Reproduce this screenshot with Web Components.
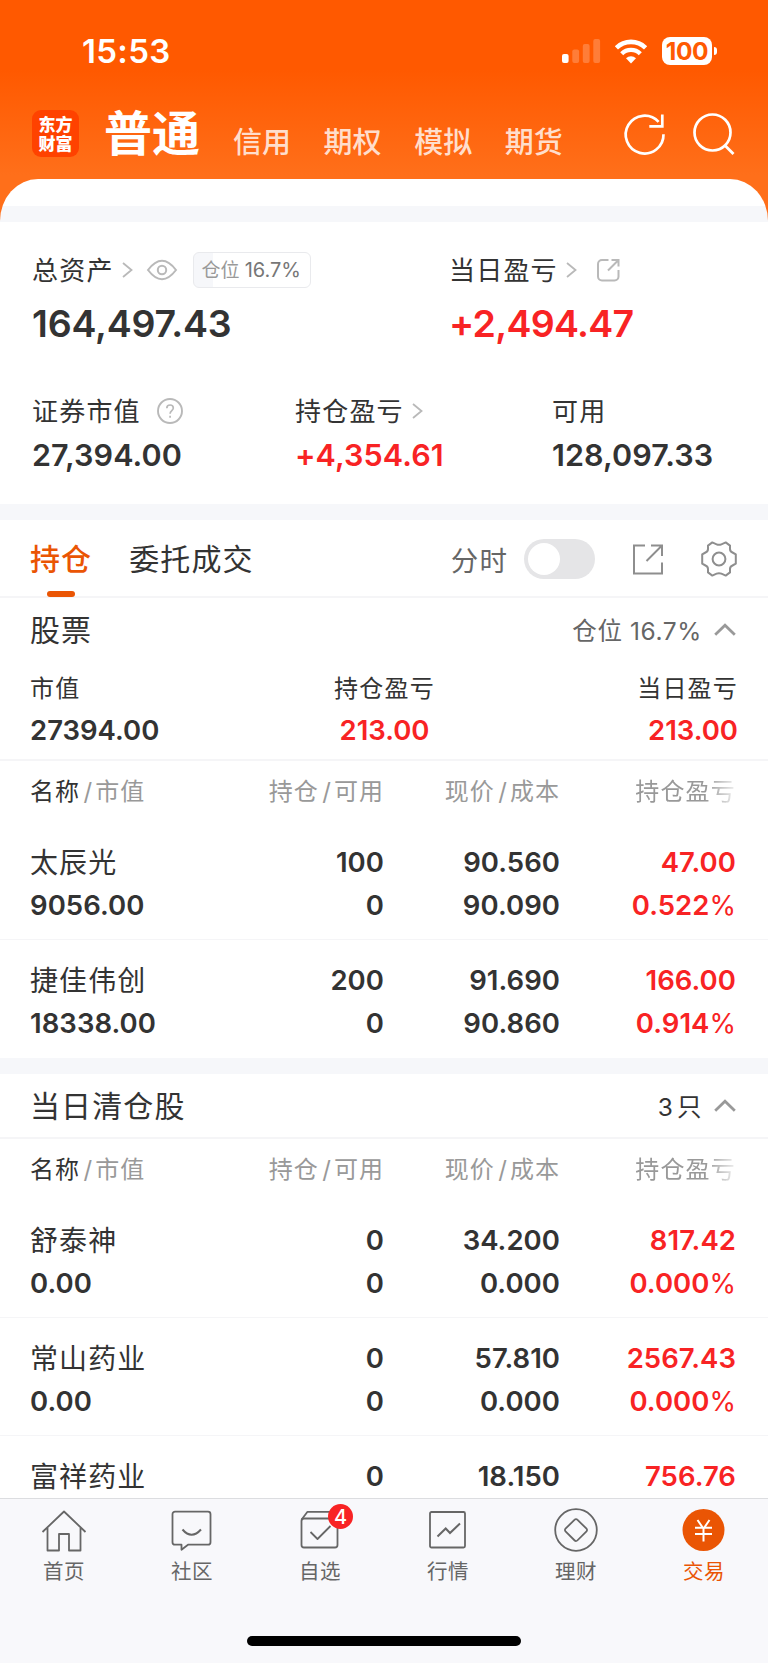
<!DOCTYPE html>
<html lang="zh-CN">
<head>
<meta charset="utf-8">
<title>交易</title>
<style>
body {
    margin: 0;
    width: 768px;
    height: 1663px;
    overflow: hidden;
    background: #fff;
    color: #333;
    font-family: Inter, "Noto Sans CJK SC", sans-serif;
    --red: #f82324;
    --brand: #ea5504;
    --band: #f6f7fa;
    --line: #f5f5f7;
}
</style>
</head>
<body>
<trade-app></trade-app>

<script>
"use strict";

/* Line icons, keyed by name: [viewBox width, viewBox height, markup]. */
const icons = {
    signal: [38, 24, `<g fill="#fff" stroke="none"><rect x="0" y="15" width="6.6" height="9" rx="2"/>
        <g opacity=".22"><rect x="10.3" y="10.5" width="6.8" height="13.5" rx="2"/><rect x="20.8" y="5" width="6.8" height="19" rx="2"/><rect x="31.3" y="0" width="6.8" height="24" rx="2"/></g></g>`],
    wifi: [34, 25, `<g stroke="#fff" fill="none"><path d="M2.4 8.8a21 21 0 0 1 29.2 0" stroke-width="4.6"/><path d="M7.7 14.7a13.3 13.3 0 0 1 18.6 0" stroke-width="4.4"/><path d="M17 24.5l-5-5.2a7.3 7.3 0 0 1 10 0z" fill="#fff" stroke="none"/></g>`],
    refresh: [42, 42, `<path d="M39.5 21.2A18.9 18.9 0 1 1 34.6 8.9M38.3 1.5v11.8H25.3" stroke-width="2.7"/>`],
    search: [42, 42, `<circle cx="19.5" cy="19.5" r="18" stroke-width="2.7"/><path d="M31.5 32l9 9" stroke-width="2.9"/>`],
    right: [11, 16, `<path d="M1 1l8.5 7L1 15" stroke-width="1.8"/>`],
    up: [22, 13, `<path d="M1.2 11.7L11 2.3l9.8 9.4" stroke-width="2.8"/>`],
    eye: [30, 20, `<path d="M1 10Q15-8.4 29 10Q15 28.4 1 10z" stroke-width="2"/><circle cx="15" cy="10" r="4.2" stroke-width="2"/>`],
    share: [23, 24, `<path d="M11.5 2H5a4 4 0 0 0-4 4v12.5a4 4 0 0 0 4 4h12.5a4 4 0 0 0 4-4V12M14.5 2h7v6.5M21 2.5L11 12.5" stroke-width="2"/>`],
    help: [26, 26, `<circle cx="13" cy="13" r="12" stroke-width="1.9"/><path d="M9.8 10.3c0-2.1 1.4-3.3 3.3-3.3 1.9 0 3.2 1.2 3.2 3 0 2.6-3.2 2.7-3.2 5.8M13.1 17.8v2" stroke-width="1.7"/>`],
    export: [30, 31, `<path d="M12 1.5H1v28h28V18.5M18 1.5h11V12M28.5 2L13.5 17" stroke-width="2"/>`],
    gear: [36, 36, `<path d="M11.3 1.4L15.6 3.3Q18 4.3 20.4 3.3L24.7 1.4L29 4.6V8Q29 10.4 31.5 11.5L34.8 13.3V22.7L31.5 24.5Q29 25.6 29 28V31.4L24.7 34.6L20.4 32.7Q18 31.7 15.6 32.7L11.3 34.6L7 31.4V28Q7 25.6 4.5 24.5L1.2 22.7V13.3L4.5 11.5Q7 10.4 7 8V4.6z" stroke-width="2" stroke-linejoin="round"/><circle cx="18" cy="18" r="6.4" stroke-width="2"/>`],
    home: [46, 46, `<path d="M1.5 25L23 4.5 44.5 25M6.5 21v22.5h11.5V27h10v16.5h11.5V21" stroke-linejoin="round"/>`],
    chat: [46, 46, `<path d="M6 4.7h33a2.5 2.5 0 0 1 2.5 2.5v28a2.5 2.5 0 0 1-2.5 2.5H19l-6.5 5v-5H6a2.5 2.5 0 0 1-2.5-2.5v-28A2.5 2.5 0 0 1 6 4.7z" stroke-linejoin="round"/><path d="M13.5 22.5q9 10.500 18.500 0" stroke-width="2"/>`],
    watch: [46, 46, `<rect x="4.5" y="11.5" width="36" height="29" rx="2.5"/><path d="M4.8 12.3l5.7-7.5h26l4 7M13.5 25l7 7 13-13" stroke-linejoin="round"/>`],
    chart: [46, 46, `<rect x="5" y="5" width="35" height="35.5" rx="1.5"/><path d="M12.5 29.5l8.2-8 4.3 4.5 10-9.5" stroke-width="2"/>`],
    wealth: [46, 46, `<circle cx="23" cy="23" r="20.8"/><path d="M21.7 12.6L12.5 21.7a1.8 1.8 0 0 0 0 2.6l9.2 9.2a1.8 1.8 0 0 0 2.6 0l9.2-9.2a1.8 1.8 0 0 0 0-2.6l-9.2-9.1a1.8 1.8 0 0 0-2.6 0z"/>`],
    trade: [46, 46, `<circle cx="22.5" cy="23" r="21" fill="#ea5504" stroke="none"/><path d="M16.5 13l6 8.7L28.5 13M22.5 21v13.5M14 20.8h17M14 27h17" stroke="#fff" stroke-width="2"/>`]
};

class AppIcon extends HTMLElement {
    connectedCallback() {
        const [w, h, markup] = icons[this.getAttribute('name')];
        this.attachShadow({mode: 'open'}).innerHTML = `
<style>
:host { display: block; flex: none; width: ${w}px; height: ${h}px; }
svg { display: block; overflow: visible; }
</style>
<svg width="${w}" height="${h}" viewBox="0 0 ${w} ${h}" fill="none" stroke="currentColor" stroke-width="1.8">${markup}</svg>`;
    }
}
customElements.define('app-icon', AppIcon);

/* Small helper: an element whose shadow root is fixed markup. */
function define(name, html) {
    const template = document.createElement('template');
    template.innerHTML = html;
    customElements.define(name, class extends HTMLElement {
        constructor() {
            super();
            this.attachShadow({mode: 'open'}).appendChild(template.content.cloneNode(true));
        }
    });
}

define('status-bar', `
<style>
:host { display: flex; align-items: center; height: 102px; padding: 0 51px 0 82px; color: #fff; }
.time { flex: 1; font-size: 33px; font-weight: 600; line-height: 40px; letter-spacing: .3px; }
.wifi { margin: 0 14px 0 14px; }
.battery { width: 50px; height: 28px; border-radius: 8px; background: #fff; color: #ff5a02; font-size: 24.5px; font-weight: 700; line-height: 28px; text-align: center; letter-spacing: -.3px; }
.tip { width: 3px; height: 8px; margin-left: 2px; border-radius: 0 3px 3px 0; background: #fff; }
</style>
<span class="time">15:53</span>
<app-icon name="signal"></app-icon>
<app-icon class="wifi" name="wifi"></app-icon>
<span class="battery">100</span><span class="tip"></span>
`);

define('account-nav', `
<style>
:host { display: flex; align-items: flex-start; height: 77px; padding: 0 33px 0 32px; color: #fff; }
.logo { display: block; width: 47px; height: 41px; margin-top: 8px; padding-top: 6px; border-radius: 9px; background: #ff4200; font-size: 17px; line-height: 18.5px; font-weight: 900; text-align: center; }
b { display: block; margin: 2px 0 0 25px; font-size: 48px; line-height: 60px; font-weight: 700; }
nav { display: flex; flex: 1; gap: 32.6px; margin: 18px 0 0 33px; color: #ffdecc; font-size: 29px; line-height: 45px; font-weight: 500; }
nav span { width: 58px; }
.refresh { margin: 11px 27px 0 0; }
.search { margin: 11px 0 0; }
</style>
<span class="logo">东方<br>财富</span>
<b>普通</b>
<nav><span>信用</span><span>期权</span><span>模拟</span><span>期货</span></nav>
<app-icon class="refresh" name="refresh"></app-icon>
<app-icon class="search" name="search"></app-icon>
`);

define('stat-cell', `
<style>
:host { display: block; }
.label { display: flex; align-items: center; height: 36px; font-size: 26px; letter-spacing: 1.2px; line-height: 37px; }
.value { font-size: var(--value-size, 30.5px); line-height: 40px; font-weight: 600; margin-top: var(--value-gap, 6px); white-space: nowrap; letter-spacing: var(--value-spacing, .1px); }
:host([up]) .value { color: var(--red); }
</style>
<div class="label"><slot name="label"></slot></div>
<div class="value"><slot></slot></div>
`);

define('asset-panel', `
<style>
:host { box-sizing: border-box; display: block; height: 282px; padding: 30px 0 0 32px; }
.total, .detail { display: grid; }
.total { grid-template-columns: 417px 1fr; --value-size: 37.5px; --value-gap: 16px; --value-spacing: -.2px; }
.total stat-cell[up] { --value-spacing: -.7px; }
.detail { grid-template-columns: 263px 257px 1fr; margin-top: 49px; }
app-icon { color: #b9b9b9; letter-spacing: 0; }
app-icon[name=right] { margin-left: 8px; }
app-icon[name=eye] { margin-left: 14px; }
app-icon[name=share] { margin-left: 20px; }
app-icon[name=help] { margin-left: 16px; }
.pill { box-sizing: border-box; display: flex; gap: 5px; height: 36px; margin-left: 16px; width: 118px; padding-left: 8px; border: 1.5px solid #e9eaed; border-radius: 6px; background: linear-gradient(90deg, #f6f7fa 19px, #fff 19px); color: #999; font-size: 19px; line-height: 35px; letter-spacing: 0; }
.pill i { font-style: normal; color: #777; font-size: 20px; }
</style>
<div class="total">
  <stat-cell><span slot="label">总资产</span><app-icon slot="label" name="right"></app-icon><app-icon slot="label" name="eye"></app-icon><span slot="label" class="pill">仓位<i>16.7%</i></span>164,497.43</stat-cell>
  <stat-cell up><span slot="label">当日盈亏</span><app-icon slot="label" name="right"></app-icon><app-icon slot="label" name="share"></app-icon>+2,494.47</stat-cell>
</div>
<div class="detail">
  <stat-cell><span slot="label">证券市值</span><app-icon slot="label" name="help"></app-icon>27,394.00</stat-cell>
  <stat-cell up><span slot="label">持仓盈亏</span><app-icon slot="label" name="right"></app-icon>+4,354.61</stat-cell>
  <stat-cell><span slot="label">可用</span>128,097.33</stat-cell>
</div>
`);

define('position-tabs', `
<style>
:host { box-sizing: border-box; display: flex; align-items: center; height: 78px; padding: 2px 31px 0 30px; border-bottom: 2px solid var(--line); font-size: 30px; letter-spacing: 1.1px; }
.tab { position: relative; line-height: 78px; margin-right: 37px; }
.active { color: var(--brand); font-weight: 500; }
.active::after { content: ""; position: absolute; left: 17px; bottom: 1px; width: 28px; height: 6px; border-radius: 3px; background: var(--brand); }
.minute { margin-left: auto; color: #666; font-size: 27.5px; }
.switch { box-sizing: border-box; width: 71px; height: 40px; margin: 0 38px 0 16px; padding: 4px; border-radius: 20px; background: #e5e5e7; }
.switch::before { content: ""; display: block; width: 32px; height: 32px; border-radius: 50%; background: #fff; }
app-icon { color: #8e8e8e; }
.export { margin-right: 38px; }
</style>
<span class="tab active">持仓</span><span class="tab">委托成交</span>
<span class="minute">分时</span><span class="switch"></span>
<app-icon class="export" name="export"></app-icon><app-icon name="gear"></app-icon>
`);

define('section-title', `
<style>
:host { display: flex; align-items: center; height: 63px; padding: 0 32px 0 30px; }
.title { flex: 1; font-size: 30px; letter-spacing: 1.1px; line-height: 40px; }
.note { font-size: 24.5px; letter-spacing: .6px; color: var(--note, #666); }
app-icon { margin-left: 12px; color: #999; }
</style>
<span class="title"><slot></slot></span>
<span class="note"><slot name="note"></slot></span>
<app-icon name="up"></app-icon>
`);

define('stock-summary', `
<style>
:host { display: grid; grid-template-columns: 304px 101px 1fr; height: 98px; padding: 0 30px; border-bottom: 2px solid var(--line); text-align: center; }
.label { margin-top: 11px; font-size: 24px; letter-spacing: 1.2px; line-height: 34px; }
.value { margin-top: 4px; font-size: 27.5px; font-weight: 600; line-height: 40px; }
.first { text-align: left; }
.last { text-align: right; }
.red { color: var(--red); }
</style>
<div class="first"><div class="label">市值</div><div class="value">27394.00</div></div>
<div><div class="label">持仓盈亏</div><div class="value red">213.00</div></div>
<div class="last"><div class="label">当日盈亏</div><div class="value red">213.00</div></div>
`);

define('holding-head', `
<style>
:host { display: grid; grid-template-columns: 181px 173px 176px 1fr; height: 61px; padding: 0 32px 0 30px; color: #999; font-size: 24px; line-height: 62px; letter-spacing: 1px; text-align: right; }
.first { text-align: left; }
b { color: #333; font-weight: 400; }
i { font-style: normal; margin: 0 2px 0 3.5px; }
.fade { letter-spacing: 1.2px; -webkit-mask-image: linear-gradient(90deg, #000 calc(100% - 30px), rgba(0,0,0,.15)); mask-image: linear-gradient(90deg, #000 calc(100% - 30px), rgba(0,0,0,.15)); }
</style>
<span class="first"><b>名称</b><i>/</i>市值</span><span>持仓<i>/</i>可用</span><span>现价<i>/</i>成本</span><span class="fade">持仓盈亏</span>
`);

/* One holding: the attributes carry the two lines of each column, split by "|". */
class HoldingRow extends HTMLElement {
    connectedCallback() {
        const [name, value] = this.getAttribute('stock').split('|'),
            cells = ['amount', 'price', 'profit'].map(key => {
                const [a, b] = this.getAttribute(key).split('|');
                return `<div class="${key}">${a}<br>${b.replace('%', '<i>%</i>')}</div>`;
            });
        this.attachShadow({mode: 'open'}).innerHTML = `
<style>
:host { box-sizing: border-box; display: grid; grid-template-columns: 181px 173px 176px 1fr; height: 118px; padding: 19px 32px 0 30px; border-bottom: 1px solid var(--line); font-size: 27.5px; font-weight: 600; line-height: 43px; letter-spacing: .05px; text-align: right; }
.name { text-align: left; white-space: nowrap; }
.name b { font-weight: 400; font-size: 28px; letter-spacing: 1.1px; position: relative; top: 1px; }
.profit { color: var(--red); }
i { font-style: normal; font-weight: 400; font-size: 27px; letter-spacing: 0; }
</style>
<div class="name"><b>${name}</b><br>${value}</div>${cells.join('')}`;
    }
}
customElements.define('holding-row', HoldingRow);

define('tab-item', `
<style>
:host { display: flex; flex: 1; flex-direction: column; align-items: center; color: #666; font-size: 20.5px; letter-spacing: .5px; }
:host([active]) { color: var(--brand); }
.icon { position: relative; margin-top: 8px; }
.label { margin-top: 4px; line-height: 30px; }
::slotted([slot=badge]) { position: absolute; left: 31px; top: -3px; width: 25px; height: 25px; border-radius: 50%; background: var(--red); color: #fff; font: 500 20px/26px Inter, sans-serif; letter-spacing: 0; text-align: center; }
</style>
<div class="icon"><slot name="icon"></slot><slot name="badge"></slot></div>
<div class="label"><slot></slot></div>
`);

define('tab-bar', `
<style>
:host { box-sizing: border-box; display: flex; flex-direction: column; justify-content: space-between; align-items: center; height: 165px; padding-bottom: 17px; border-top: 1px solid #dcdde0; background: #f8f8fb; }
nav { display: flex; width: 768px; }
.home { width: 274px; height: 10px; border-radius: 5px; background: #000; }
</style>
<nav><slot></slot></nav>
<div class="home"></div>
`);

define('trade-app', `
<style>
:host { display: flex; flex-direction: column; height: 1663px; }
header { flex: none; height: 222px; background: linear-gradient(#ff5900 70px, #ff6f1a 175px); }
.sheet { height: 43px; border-radius: 38px 38px 0 0 / 42px 42px 0 0; background: linear-gradient(#fff 27px, var(--band) 27px); }
main { flex: 1; overflow: hidden; min-height: 0; }
hr { height: 16px; margin: 0; border: 0; background: var(--band); }
.cleared { --note: #333; border-bottom: 2px solid var(--line); }
.count { word-spacing: -4px; }
.last { border-bottom: 0; }
tab-bar { flex: none; }
</style>
<header>
  <status-bar></status-bar>
  <account-nav></account-nav>
  <div class="sheet"></div>
</header>
<main>
  <asset-panel></asset-panel>
  <hr>
  <position-tabs></position-tabs>
  <section-title>股票<span slot="note">仓位 16.7%</span></section-title>
  <stock-summary></stock-summary>
  <holding-head></holding-head>
  <holding-row stock="太辰光|9056.00" amount="100|0" price="90.560|90.090" profit="47.00|0.522%"></holding-row>
  <holding-row class="last" stock="捷佳伟创|18338.00" amount="200|0" price="91.690|90.860" profit="166.00|0.914%"></holding-row>
  <hr>
  <section-title class="cleared">当日清仓股<span slot="note" class="count">3 只</span></section-title>
  <holding-head></holding-head>
  <holding-row stock="舒泰神|0.00" amount="0|0" price="34.200|0.000" profit="817.42|0.000%"></holding-row>
  <holding-row stock="常山药业|0.00" amount="0|0" price="57.810|0.000" profit="2567.43|0.000%"></holding-row>
  <holding-row stock="富祥药业|" amount="0|" price="18.150|" profit="756.76|"></holding-row>
</main>
<tab-bar>
  <tab-item><app-icon slot="icon" name="home"></app-icon>首页</tab-item>
  <tab-item><app-icon slot="icon" name="chat"></app-icon>社区</tab-item>
  <tab-item><app-icon slot="icon" name="watch"></app-icon>自选<span slot="badge">4</span></tab-item>
  <tab-item><app-icon slot="icon" name="chart"></app-icon>行情</tab-item>
  <tab-item><app-icon slot="icon" name="wealth"></app-icon>理财</tab-item>
  <tab-item active><app-icon slot="icon" name="trade"></app-icon>交易</tab-item>
</tab-bar>
`);
</script>
</body>
</html>
